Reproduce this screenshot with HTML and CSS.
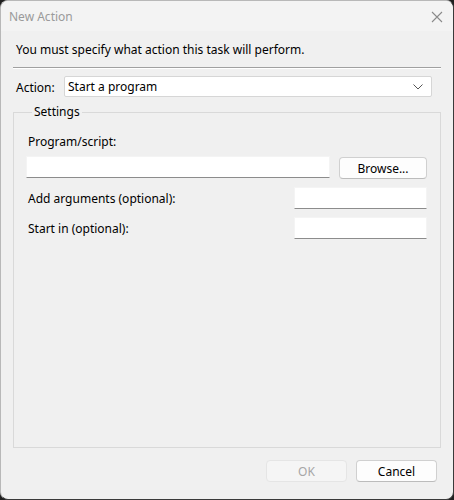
FILE: index.html
```html
<!DOCTYPE html>
<html lang="en">
<head>
    <meta charset="UTF-8">
    <meta name="viewport" content="width=device-width, initial-scale=1.0">
    <title>New Action</title>
    <link rel="stylesheet" href="styles.css">
</head>
<body>
    <div class="dialog">
        <div class="titlebar">
            <span class="title">New Action</span>
            <svg class="close" width="12" height="12" viewBox="0 0 12 12">
                <path d="M1 1 L11 11 M11 1 L1 11" stroke="#8a8a8a" stroke-width="1.1" fill="none"/>
            </svg>
        </div>

        <div class="content">
            <p class="intro">You must specify what action this task will perform.</p>
            <div class="separator"></div>

            <div class="action_row">
                <label class="action_label">Action:</label>
                <div class="select">
                    <span>Start a program</span>
                    <svg width="10" height="6" viewBox="0 0 10 6">
                        <path d="M0.5 0.5 L5 5 L9.5 0.5" stroke="#555" stroke-width="1" fill="none"/>
                    </svg>
                </div>
            </div>

            <fieldset class="settings">
                <legend>Settings</legend>

                <div class="field_label">Program/script:</div>
                <div class="program_row">
                    <div class="textbox wide"></div>
                    <div class="button">Browse...</div>
                </div>

                <div class="option_row">
                    <span>Add arguments (optional):</span>
                    <div class="textbox small"></div>
                </div>

                <div class="option_row">
                    <span>Start in (optional):</span>
                    <div class="textbox small"></div>
                </div>
            </fieldset>
        </div>

        <div class="footer">
            <div class="button disabled">OK</div>
            <div class="button">Cancel</div>
        </div>
    </div>
</body>
</html>
```

FILE: styles.css
```css
html, body {
    margin: 0;
    height: 100%;
    background: #1f1f1f;
}

body {
    font-family: "Noto Sans", "Open Sans", sans-serif;
    font-size: 12px;
    color: #000;
}

.dialog {
    box-sizing: border-box;
    height: 500px;
    display: flex;
    flex-direction: column;
    background: #f0f0f0;
    border: 1px solid #b8b8b8;
    border-right-color: #3a3a3a;
    border-bottom-color: #3a3a3a;
    border-radius: 8px;
    overflow: hidden;
}

.titlebar {
    height: 30px;
    display: flex;
    align-items: center;
    justify-content: space-between;
    padding: 0 10px 0 8px;
    background: #f3f3f3;
}

.title {
    color: #9a9a9a;
    margin-top: 1px;
}

.close {
    margin-top: 1px;
}

.content {
    flex: 1;
    display: flex;
    flex-direction: column;
    padding: 0 12px;
}

.intro {
    margin: 11px 0 0 3px;
    line-height: 16px;
}

.separator {
    height: 1px;
    margin-top: 9px;
    background: #a0a0a0;
    border-bottom: 1px solid #fff;
}

.action_row {
    display: flex;
    align-items: center;
    margin-top: 7px;
    margin-right: 9px;
}

.action_label {
    width: 51px;
    flex-shrink: 0;
    padding-left: 3px;
    box-sizing: border-box;
    margin-top: 2px;
}

.select {
    flex: 1;
    height: 19px;
    display: flex;
    align-items: center;
    justify-content: space-between;
    padding: 0 8px 0 3px;
    background: #fff;
    border: 1px solid #d6d6d6;
    border-radius: 2px;
}

.settings {
    flex: 1;
    margin: 7px 0 0;
    padding: 0 13px 0 12px;
    border: 1px solid #d9d9d9;
    min-width: 0;
}

.settings legend {
    margin-left: 6px;
    padding: 0 2px;
    line-height: 16px;
}

.field_label {
    margin: 14px 0 0 2px;
    line-height: 16px;
}

.program_row {
    display: flex;
    gap: 9px;
    margin-top: 6px;
}

.textbox {
    box-sizing: border-box;
    height: 22px;
    background: #fff;
    border: 1px solid #f4f4f4;
    border-bottom-color: #8c8c8c;
}

.wide {
    flex: 1;
}

.small {
    width: 133px;
}

.button {
    box-sizing: border-box;
    height: 22px;
    width: 88px;
    display: flex;
    align-items: center;
    justify-content: center;
    background: #fdfdfd;
    border: 1px solid #d0d0d0;
    border-bottom-color: #bcbcbc;
    border-radius: 4px;
    margin-top: 1px;
}

.option_row {
    display: flex;
    align-items: center;
    justify-content: space-between;
    margin-top: 8px;
    padding-left: 2px;
}

.option_row:first-of-type {
    margin-top: 9px;
}

.footer {
    display: flex;
    justify-content: flex-end;
    gap: 9px;
    padding: 12px 16px 17px;
}

.footer .button {
    width: 81px;
    margin-top: 0;
}

.button.disabled {
    color: #a6a6a6;
    background: #f5f5f5;
    border-color: #e5e5e5;
}
```
